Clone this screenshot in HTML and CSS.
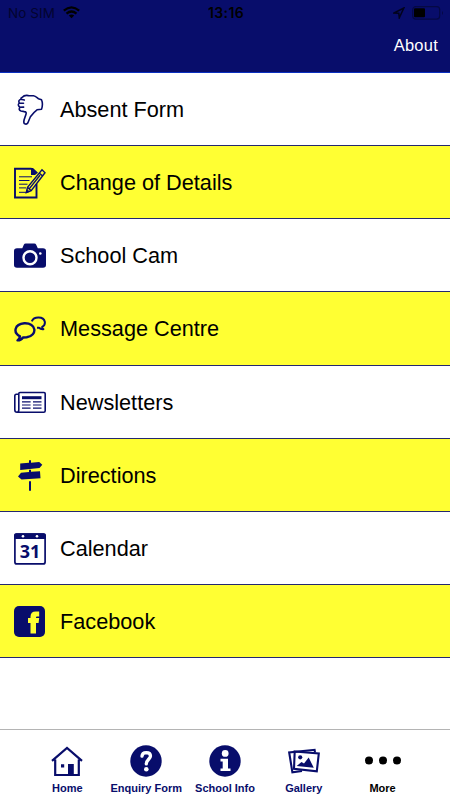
FILE: index.html
```html
<!DOCTYPE html>
<html lang="en">
<head>
<meta charset="utf-8">
<title>More</title>
<link rel="stylesheet" href="styles.css">
</head>
<body>
<div class="app">
  <header class="header">
    <div class="status">
      <div class="carrier"><span>No SIM</span>
        <svg width="17" height="13" viewBox="0 0 17 13" fill="none" stroke="#000" stroke-width="2.2"><path d="M.8 4.6Q8.5-2 16.2 4.6M3.5 7.6Q8.5 3.4 13.5 7.6"/><path d="M5.8 9.5Q8.5 7.3 11.2 9.5L8.5 12.2Z" fill="#000" stroke="none"/></svg>
      </div>
      <div class="time">13:16</div>
      <div class="power">
        <svg width="12" height="12" viewBox="0 0 12 12" fill="none" stroke="#02031c" stroke-width="1.5"><path d="M1 6 10.8 1 6.3 10.8 5.8 6.3Z"/></svg>
        <svg width="32" height="14" viewBox="0 0 32 14"><rect x=".7" y=".7" width="27" height="12.4" rx="3" fill="none" stroke="#050944" stroke-width="1.2"/><rect x="2" y="2.3" width="11" height="9" rx="1" fill="#000"/><path d="M30 5Q32 7 30 9Z" fill="#050944"/></svg>
      </div>
    </div>
    <div class="nav"><a class="about">About</a></div>
  </header>

  <main class="list">
    <div class="row"><svg class="icon" viewBox="0 0 32 32" fill="none" stroke="#080d6b" stroke-width="1.6" stroke-linejoin="round" stroke-linecap="round"><path d="M8.3 3.2C10 1.2 12 1.1 14.5 1.6L19.5 1.8C21.5 2 22.8 3.5 24.5 4.8L27.5 5.8C28.7 8.5 28.6 12 27.5 15.2L23 15.8C20 18 18 20.5 16.4 22.8L13.8 29C12.5 31 9.7 30 9.8 28C9.8 25 11.5 22.5 12 20.2 12.5 18.3 11.8 17.8 10.3 17.6L7 17C5 16.4 4.8 14.8 6 13.3 4.1 12.2 3.8 10.3 5.3 9 4.3 7 5.1 5.6 7 5.2 6.8 4.3 7.3 3.4 8.3 3.2ZM7 5.2 10.3 6M5.3 9 9.5 9.3M6 13.3 9.6 13.1"/></svg><span class="absent">Absent Form</span></div>

    <div class="row alt"><svg class="icon" viewBox="0 0 32 32" fill="none" stroke="#080d6b"><path d="M17.5 1.7H1V30.5H22.5V17" stroke-width="1.9"/><path d="M17 1H19L24 5.8 21 8H17Z" fill="#080d6b" stroke="none"/><path d="M5 9.8H18M5 13.5H15.5M5 17.2H13.5M5 20.9H12M5 25.3H12" stroke-width="1"/><path d="M28 2.8 31 5.7 17.2 23.7 12.3 25.6 13.5 20.2ZM25.2 6 28.6 9M13.5 20.2 17.2 23.7M26 8.2 15.2 21.9" stroke-width="1.4"/><path d="M12.3 25.6 13 22.7 15.1 24.6Z" fill="#080d6b"/></svg><span class="details">Change of Details</span></div>

    <div class="row"><svg class="icon" viewBox="0 0 32 32"><path d="M3 4.8H8.3L9.8 1.2Q10.3 0 11.8 0H20.2Q21.7 0 22.2 1.2L23.8 4.8H29Q32 4.8 32 7.5V21.5Q32 24.2 29 24.2H3Q0 24.2 0 21.5V7.5Q0 4.8 3 4.8Z" transform="translate(0 3.5)" fill="#080d6b"/><circle cx="16" cy="17.7" r="6.5" fill="none" stroke="#fff" stroke-width="2.4"/><circle cx="26.3" cy="13.5" r="1.3" fill="#fff"/></svg><span class="cam">School Cam</span></div>

    <div class="row alt"><svg class="icon" viewBox="0 0 32 32" fill="none" stroke="#080d6b" stroke-width="2.4" stroke-linejoin="round"><path d="M6 23.4C-1.2 19.5.3 11.2 10.3 10.3 22.5 9.7 24 22.3 12.7 24.3L9 24.5C7.7 26.4 5.9 27.5 3.5 27.4 5 26.2 5.7 25.2 6 23.4Z"/><path d="M17.8 8.4C20 3.1 29.6 3.5 30.8 8.7 31.2 11.3 30.4 12.7 28.2 13.9 28.2 15 28.7 15.6 29.4 16.2 27.8 16.4 26.2 16 25 14.8H23" stroke-width="2"/></svg><span class="message">Message Centre</span></div>

    <div class="row"><svg class="icon" viewBox="0 0 32 32" fill="none" stroke="#080d6b"><path d="M4.8 6.6Q4.8 5.5 6 5.5H30Q31.2 5.5 31.2 6.7V23.8Q31.2 25.2 29.8 25.2H3Q.8 25.2.8 22.8V9Q.8 7.2 2.4 7.2H4.8ZM4.8 7V22.8Q4.8 25.2 3 25.2" stroke-width="1.6"/><path d="M8 10.7H27.5" stroke-width="3"/><path d="M8 14.8H16.6M8 18H16.6M8 21.2H16.6M19 14.8H27.5M19 18H27.5M19 21.2H27.5" stroke-width="1.2"/></svg><span class="news">Newsletters</span></div>

    <div class="row alt"><svg class="icon" viewBox="0 0 32 32" fill="#080d6b"><path d="M15 .2H17V2.7L25.2 2 28.3 4.7 25.5 8.1 6.2 10V3.4L15 2.7ZM26 11.2 26.5 18.2 7.5 19.5 4 16.4 7 12.7 15 11.9V9.7H17V11.7ZM15 21.2H17V30.7H15Z"/></svg><span class="directions">Directions</span></div>

    <div class="row"><svg class="icon" viewBox="0 0 32 32"><rect x=".9" y="1.1" width="30.2" height="29.8" rx="2" fill="none" stroke="#080d6b" stroke-width="1.7"/><path d="M0 6V2.5Q0 .3 2.2.3H29.8Q32 .3 32 2.5V6Z" fill="#080d6b"/><circle cx="9" cy="3.2" r="1.3" fill="#fff"/><circle cx="23" cy="3.2" r="1.3" fill="#fff"/><text class="date" x="16" y="25">31</text></svg><span class="calendar">Calendar</span></div>

    <div class="row alt"><svg class="icon" viewBox="0 0 32 32"><rect width="31" height="31" rx="5" fill="#080d6b"/><path d="M16.5 27.6V17H14V12H16.5V10.8Q16.5 5.6 21.8 5.6H25.2V10.4H23Q22 10.4 22 11.6V12H25.2L24.6 17H22V27.6Z" fill="#ffff33"/></svg><span class="facebook">Facebook</span></div>
  </main>

  <nav class="tabs">
    <a class="tab"><svg class="icon" viewBox="0 0 32 32" fill="none" stroke="#080d6b" stroke-width="2.2"><path d="M1 15.8 16 3 31 15.8M4.2 14.5V30H27.8V14.5"/><path d="M17 19H22.8V30H17ZM10 19.2H13.2V22.4H10Z" fill="#080d6b" stroke="none"/></svg><span class="home">Home</span></a>
    <a class="tab"><svg class="icon" viewBox="0 0 32 32"><circle cx="16" cy="16" r="15.7" fill="#080d6b"/><path d="M12 11.2Q12.2 7.8 16.3 7.7 20.5 7.8 20.5 11.1C20.5 14 16.3 14.8 16.3 18.9" fill="none" stroke="#fff" stroke-width="3.3" stroke-linecap="round"/><circle cx="16.3" cy="24.2" r="2.3" fill="#fff"/></svg><span class="enquiry">Enquiry Form</span></a>
    <a class="tab"><svg class="icon" viewBox="0 0 32 32"><circle cx="16" cy="16" r="15.7" fill="#080d6b"/><circle cx="16.2" cy="8.4" r="3.4" fill="#fff"/><path d="M11.5 13.8H19V23.4H21.5V26H11.5V23.4H13.7V16.4H11.5Z" fill="#fff"/></svg><span class="info">School Info</span></a>
    <a class="tab"><svg class="icon" viewBox="0 0 32 32" fill="none" stroke="#080d6b" stroke-width="2.1"><path d="M27 7.3 26.6 4.8 1.2 7.5 4.4 27.3 14 26" stroke-width="2.1"/><path d="M6.7 6.5 30.8 8.5 28.8 26.3 6 23.8Z"/><circle cx="12.2" cy="12.3" r="2.1" fill="#080d6b" stroke="none"/><path d="M8.7 21 13.5 17 16 18.6 20.7 12.6 25.8 22.8Z" fill="#080d6b" stroke="none"/></svg><span class="gallery">Gallery</span></a>
    <a class="tab more"><svg class="dots" viewBox="0 0 38 32"><circle cx="5" cy="15.5" r="4"/><circle cx="19" cy="15.5" r="4"/><circle cx="33" cy="15.5" r="4"/></svg><span class="morelabel">More</span></a>
  </nav>
</div>
</body>
</html>
```

FILE: styles.css
```css
* { box-sizing: border-box; }
body {
  margin: 0;
  background: #fff;
  font-family: "Liberation Sans", Arial, sans-serif;
}
.app {
  width: 450px;
  height: 800px;
  display: flex;
  flex-direction: column;
  overflow: hidden;
}
.header {
  height: 73px;
  flex: none;
  background: #080d6b;
  border-bottom: 1px solid #0a2fc0;
}
.status {
  height: 25px;
  padding: 0 6px 0 8px;
  display: grid;
  grid-template-columns: 1fr auto 1fr;
  align-items: center;
  font-family: Inter, sans-serif;
}
.carrier {
  display: flex;
  align-items: center;
  gap: 8px;
  font-size: 13.5px;
  letter-spacing: .1px;
  color: #03042f;
}
.time { font-size: 14px; font-weight: 600; letter-spacing: .4px; }
.power { display: flex; align-items: center; justify-content: flex-end; gap: 7px; }
.nav {
  display: flex;
  justify-content: flex-end;
  padding: 10px 12px 0 0;
  color: #fff;
  font-size: 16.5px;
  letter-spacing: .25px;
  line-height: 20px;
}
.list { flex: none; }
.row {
  height: 73.15px;
  display: flex;
  align-items: center;
  gap: 14px;
  padding: 2px 0 0 14px;
  border-bottom: 1px solid #24286f;
  font-size: 21.7px;
  color: #000;
}
.alt { background: #ffff33; }
.icon { width: 32px; height: 32px; flex: none; display: block; }
.date { font: bold 18px "Noto Sans", sans-serif; text-anchor: middle; fill: #080d6b; }
.tabs {
  margin-top: auto;
  height: 71px;
  flex: none;
  border-top: 1px solid #b4b4b4;
  padding: 15px 28px 0;
  display: grid;
  grid-template-columns: repeat(5, 78.8px);
}
.tab {
  display: flex;
  flex-direction: column;
  align-items: center;
  gap: 4px;
  font-size: 11px;
  line-height: 14px;
  font-weight: bold;
  color: #080d6b;
  white-space: nowrap;
}
.more { color: #000; }
.dots { width: 38px; height: 32px; }
```
